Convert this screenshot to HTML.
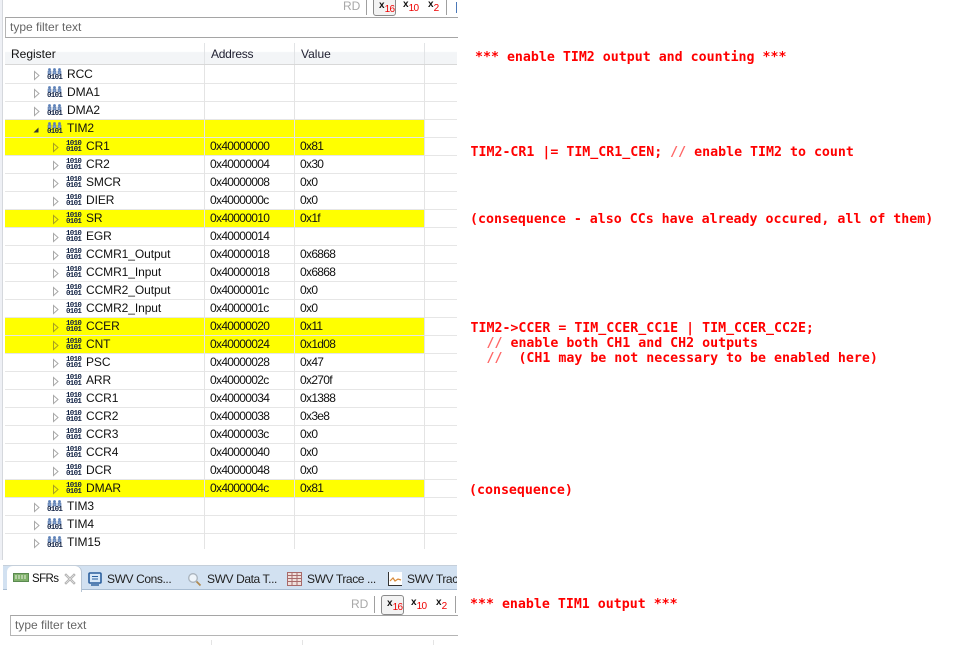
<!DOCTYPE html>
<html><head><meta charset="utf-8"><style>
html,body{margin:0;padding:0;background:#fff}
#p{position:relative;width:957px;height:645px;overflow:hidden;background:#fff;font-family:"Liberation Sans",sans-serif;font-size:12px;color:#111}
#p div,#p span.a,#p svg{position:absolute}
.r{left:5px;width:452px;height:18px;line-height:17px;box-shadow:inset 0 -1px 0 #e6e6e6}
.y{background:linear-gradient(#ff0,#ff0) 0 0/419px 17px no-repeat}
.v{top:65px;width:1px;height:484px;background:#e4e4e4}
.t{white-space:nowrap;line-height:17px;top:0;letter-spacing:-.08px}
.t[style*="left:205"],.t[style*="left:295"]{letter-spacing:-.68px}
.m{position:absolute;font:bold 13.27px/15px "DejaVu Sans Mono",monospace;color:#f00;white-space:pre}
.m i{font-style:normal;color:#f66}
.b{font:bold 7.5px/6px "Liberation Mono",monospace;color:#124;letter-spacing:-.7px;white-space:pre;width:17px}
.x{font:bold 10px/11px "Liberation Sans",sans-serif;color:#111;white-space:nowrap}
.x b{font-weight:normal;font-size:10px;color:#e00;position:relative;top:4px;left:0;letter-spacing:-.6px}
.tab{font-size:12px;color:#222;white-space:nowrap;top:571px;line-height:16px;letter-spacing:-.4px}
</style></head><body><div id="p">

<div style="left:0;top:0;width:3px;height:560px;background:#eef0f5"></div>
<div style="left:2px;top:0;width:1px;height:560px;background:#d5d8dd"></div>

<div style="left:343px;top:-1px;font-size:12px;color:#a8a8a8;line-height:14px">RD</div>
<div style="left:366px;top:0;width:1px;height:15px;background:#a0a0a0"></div>
<div style="left:373px;top:-4px;width:21px;height:18px;border:1px solid #8a8a8a;border-radius:3px;background:#f3f3f3"></div>
<div class="x" style="left:379px;top:0">x<b>16</b></div>
<div class="x" style="left:403px;top:-1px">x<b>10</b></div>
<div class="x" style="left:428px;top:-1px">x<b>2</b></div>
<div style="left:446px;top:0;width:1px;height:15px;background:#a0a0a0"></div>
<div style="left:456px;top:2px;width:1px;height:11px;background:#4a78b8"></div>

<div style="left:5px;top:17px;width:452px;height:19px;border-top:1px solid #a5a5a5;border-left:1px solid #b5b5b5;border-bottom:1px solid #a5a5a5;box-sizing:content-box;background:#fff;color:#666;line-height:19px;text-indent:4px">type filter text</div>

<div style="left:5px;top:43px;width:452px;height:21px;background:linear-gradient(#fff 0,#fff 40%,#f3f5f7 45%,#f3f5f7 100%);border-bottom:1px solid #d8d8d8"></div>
<div style="left:11px;top:46px;line-height:16px">Register</div>
<div style="left:211px;top:46px;line-height:16px;color:#223;letter-spacing:-.25px">Address</div>
<div style="left:301px;top:46px;line-height:16px;color:#223">Value</div>
<div style="left:204px;top:43px;width:1px;height:21px;background:#e2e4e6"></div>
<div style="left:294px;top:43px;width:1px;height:21px;background:#e2e4e6"></div>
<div style="left:424px;top:43px;width:1px;height:21px;background:#e2e4e6"></div>

<div id="rows" style="left:0;top:0;width:457px;height:560px">
<div class="r" style="top:66px"><div class="t" style="left:62px">RCC</div></div>
<div class="r" style="top:84px"><div class="t" style="left:62px">DMA1</div></div>
<div class="r" style="top:102px"><div class="t" style="left:62px">DMA2</div></div>
<div class="r y" style="top:120px"><div class="t" style="left:62px">TIM2</div></div>
<div class="r y" style="top:138px"><div class="t" style="left:81px">CR1</div><div class="t" style="left:205px">0x40000000</div><div class="t" style="left:295px">0x81</div></div>
<div class="r" style="top:156px"><div class="t" style="left:81px">CR2</div><div class="t" style="left:205px">0x40000004</div><div class="t" style="left:295px">0x30</div></div>
<div class="r" style="top:174px"><div class="t" style="left:81px">SMCR</div><div class="t" style="left:205px">0x40000008</div><div class="t" style="left:295px">0x0</div></div>
<div class="r" style="top:192px"><div class="t" style="left:81px">DIER</div><div class="t" style="left:205px">0x4000000c</div><div class="t" style="left:295px">0x0</div></div>
<div class="r y" style="top:210px"><div class="t" style="left:81px">SR</div><div class="t" style="left:205px">0x40000010</div><div class="t" style="left:295px">0x1f</div></div>
<div class="r" style="top:228px"><div class="t" style="left:81px">EGR</div><div class="t" style="left:205px">0x40000014</div></div>
<div class="r" style="top:246px"><div class="t" style="left:81px">CCMR1_Output</div><div class="t" style="left:205px">0x40000018</div><div class="t" style="left:295px">0x6868</div></div>
<div class="r" style="top:264px"><div class="t" style="left:81px">CCMR1_Input</div><div class="t" style="left:205px">0x40000018</div><div class="t" style="left:295px">0x6868</div></div>
<div class="r" style="top:282px"><div class="t" style="left:81px">CCMR2_Output</div><div class="t" style="left:205px">0x4000001c</div><div class="t" style="left:295px">0x0</div></div>
<div class="r" style="top:300px"><div class="t" style="left:81px">CCMR2_Input</div><div class="t" style="left:205px">0x4000001c</div><div class="t" style="left:295px">0x0</div></div>
<div class="r y" style="top:318px"><div class="t" style="left:81px">CCER</div><div class="t" style="left:205px">0x40000020</div><div class="t" style="left:295px">0x11</div></div>
<div class="r y" style="top:336px"><div class="t" style="left:81px">CNT</div><div class="t" style="left:205px">0x40000024</div><div class="t" style="left:295px">0x1d08</div></div>
<div class="r" style="top:354px"><div class="t" style="left:81px">PSC</div><div class="t" style="left:205px">0x40000028</div><div class="t" style="left:295px">0x47</div></div>
<div class="r" style="top:372px"><div class="t" style="left:81px">ARR</div><div class="t" style="left:205px">0x4000002c</div><div class="t" style="left:295px">0x270f</div></div>
<div class="r" style="top:390px"><div class="t" style="left:81px">CCR1</div><div class="t" style="left:205px">0x40000034</div><div class="t" style="left:295px">0x1388</div></div>
<div class="r" style="top:408px"><div class="t" style="left:81px">CCR2</div><div class="t" style="left:205px">0x40000038</div><div class="t" style="left:295px">0x3e8</div></div>
<div class="r" style="top:426px"><div class="t" style="left:81px">CCR3</div><div class="t" style="left:205px">0x4000003c</div><div class="t" style="left:295px">0x0</div></div>
<div class="r" style="top:444px"><div class="t" style="left:81px">CCR4</div><div class="t" style="left:205px">0x40000040</div><div class="t" style="left:295px">0x0</div></div>
<div class="r" style="top:462px"><div class="t" style="left:81px">DCR</div><div class="t" style="left:205px">0x40000048</div><div class="t" style="left:295px">0x0</div></div>
<div class="r y" style="top:480px"><div class="t" style="left:81px">DMAR</div><div class="t" style="left:205px">0x4000004c</div><div class="t" style="left:295px">0x81</div></div>
<div class="r" style="top:498px"><div class="t" style="left:62px">TIM3</div></div>
<div class="r" style="top:516px"><div class="t" style="left:62px">TIM4</div></div>
<div class="r" style="top:534px;box-shadow:none"><div class="t" style="left:62px">TIM15</div></div>
</div>

<div class="v" style="left:204px"></div>
<div class="v" style="left:294px"></div>
<div class="v" style="left:424px"></div>

<svg style="left:0;top:0" width="100" height="560" viewBox="0 0 100 560">
<defs>
<g id="o"><path d="M0.5 0.5L5 4.5L0.5 8.5Z" fill="none" stroke="#a9a9a9"/></g>
<g id="oy"><path d="M0.5 0.5L5 4.5L0.5 8.5Z" fill="none" stroke="#a8a020"/></g>
<g id="pp"><g fill="#5b80b8"><circle cx="2.5" cy="1.5" r="1.4"/><circle cx="7.5" cy="1.5" r="1.4"/><circle cx="12.5" cy="1.5" r="1.4"/></g><g fill="#86a4cf" stroke="#3f5f95" stroke-width=".5"><rect x="1" y="3" width="3" height="3"/><rect x="6" y="3" width="3" height="3"/><rect x="11" y="3" width="3" height="3"/></g></g>
</defs>
<use href="#o" x="34" y="71"/><use href="#o" x="34" y="89"/><use href="#o" x="34" y="107"/>
<path d="M33.5 132.5L38.5 127.5V132.5Z" fill="#333"/>
<use href="#oy" x="53" y="143"/><use href="#o" x="53" y="161"/><use href="#o" x="53" y="179"/><use href="#o" x="53" y="197"/><use href="#oy" x="53" y="215"/><use href="#o" x="53" y="233"/><use href="#o" x="53" y="251"/><use href="#o" x="53" y="269"/><use href="#o" x="53" y="287"/><use href="#o" x="53" y="305"/><use href="#oy" x="53" y="323"/><use href="#oy" x="53" y="341"/><use href="#o" x="53" y="359"/><use href="#o" x="53" y="377"/><use href="#o" x="53" y="395"/><use href="#o" x="53" y="413"/><use href="#o" x="53" y="431"/><use href="#o" x="53" y="449"/><use href="#o" x="53" y="467"/><use href="#oy" x="53" y="485"/><use href="#o" x="34" y="503"/><use href="#o" x="34" y="521"/><use href="#o" x="34" y="539"/>
<use href="#pp" x="47" y="68"/><use href="#pp" x="47" y="86"/><use href="#pp" x="47" y="104"/><use href="#pp" x="47" y="122"/><use href="#pp" x="47" y="500"/><use href="#pp" x="47" y="518"/><use href="#pp" x="47" y="536"/>
</svg>

<div class="b" style="left:47px;top:75px">0101</div>
<div class="b" style="left:47px;top:93px">0101</div>
<div class="b" style="left:47px;top:111px">0101</div>
<div class="b" style="left:47px;top:129px">0101</div>
<div class="b" style="left:47px;top:507px">0101</div>
<div class="b" style="left:47px;top:525px">0101</div>
<div class="b" style="left:47px;top:543px">0101</div>

<div class="b" style="left:66px;top:141px">1010
0101</div>
<div class="b" style="left:66px;top:159px">1010
0101</div>
<div class="b" style="left:66px;top:177px">1010
0101</div>
<div class="b" style="left:66px;top:195px">1010
0101</div>
<div class="b" style="left:66px;top:213px">1010
0101</div>
<div class="b" style="left:66px;top:231px">1010
0101</div>
<div class="b" style="left:66px;top:249px">1010
0101</div>
<div class="b" style="left:66px;top:267px">1010
0101</div>
<div class="b" style="left:66px;top:285px">1010
0101</div>
<div class="b" style="left:66px;top:303px">1010
0101</div>
<div class="b" style="left:66px;top:321px">1010
0101</div>
<div class="b" style="left:66px;top:339px">1010
0101</div>
<div class="b" style="left:66px;top:357px">1010
0101</div>
<div class="b" style="left:66px;top:375px">1010
0101</div>
<div class="b" style="left:66px;top:393px">1010
0101</div>
<div class="b" style="left:66px;top:411px">1010
0101</div>
<div class="b" style="left:66px;top:429px">1010
0101</div>
<div class="b" style="left:66px;top:447px">1010
0101</div>
<div class="b" style="left:66px;top:465px">1010
0101</div>
<div class="b" style="left:66px;top:483px">1010
0101</div>

<!-- bottom panel -->
<div style="left:0;top:565px;width:457px;height:80px;background:#fff"></div>
<div style="left:3px;top:565px;width:454px;height:25px;background:#d2e1f1;border-top:1px solid #c5cfda;box-sizing:border-box;border-bottom:1px solid #a9bdd2"></div>
<div style="left:7px;top:566px;width:74px;height:26px;background:#fff;border-radius:6px 6px 0 0;box-shadow:1px 0 0 #b6c4d3"></div>

<svg style="left:12px;top:572px" width="17" height="12" viewBox="0 0 17 12"><rect x="1.5" y="1.5" width="15" height="8" fill="#7fb06a" stroke="#5a8a50"/><path d="M3 4h12M3 6h12" stroke="#e8f0e0" stroke-dasharray="2 1"/></svg>
<div class="tab" style="left:32px;color:#111;font-size:11.5px;letter-spacing:-.6px">SFRs</div>
<svg style="left:64px;top:573px" width="12" height="12" viewBox="0 0 12 12"><path d="M2 1L6 5L10 1L11 2L7 6L11 10L10 11L6 7L2 11L1 10L5 6L1 2Z" fill="#fff" stroke="#b4b4b4"/></svg>

<svg style="left:88px;top:572px" width="15" height="14" viewBox="0 0 15 14"><rect x="1" y="1" width="12" height="10" rx="1" fill="#d8e8f8" stroke="#2a5f9e" stroke-width="1.6"/><path d="M4 4.5h6M4 7h6" stroke="#2a5f9e"/><path d="M3 13h8" stroke="#2a5f9e" stroke-width="1.4"/></svg>
<div class="tab" style="left:107px">SWV Cons...</div>
<svg style="left:187px;top:572px" width="15" height="15" viewBox="0 0 15 15"><circle cx="6" cy="6" r="4.3" fill="#eef4fa" stroke="#a9b3bd" stroke-width="1.3"/><path d="M9.5 9.5L13.5 13.5" stroke="#b08a50" stroke-width="1.8"/></svg>
<div class="tab" style="left:207px">SWV Data T...</div>
<svg style="left:287px;top:572px" width="15" height="14" viewBox="0 0 15 14"><rect x=".5" y=".5" width="14" height="13" fill="#f0e0dc" stroke="#a86a6a"/><path d="M.5 3.5h14M.5 6.5h14M.5 9.5h14M5 .5v13M10 .5v13" stroke="#a86a6a"/></svg>
<div class="tab" style="left:307px">SWV Trace ...</div>
<svg style="left:387px;top:571px" width="16" height="16" viewBox="0 0 16 16"><rect x="1" y="1" width="14" height="14" fill="#fff"/><path d="M1.5 1v13.5H15" fill="none" stroke="#333"/><path d="M3 10L6 7L8 10L11 8L14 9" fill="none" stroke="#d88a3a" stroke-width="1.2"/></svg>
<div class="tab" style="left:407px;width:50px;overflow:hidden">SWV Trace</div>

<div style="left:351px;top:597px;font-size:12px;color:#a8a8a8;line-height:14px">RD</div>
<div style="left:374px;top:596px;width:1px;height:17px;background:#a0a0a0"></div>
<div style="left:381px;top:595px;width:21px;height:18px;border:1px solid #8a8a8a;border-radius:3px;background:#f3f3f3"></div>
<div class="x" style="left:387px;top:598px">x<b>16</b></div>
<div class="x" style="left:411px;top:597px">x<b>10</b></div>
<div class="x" style="left:436px;top:597px">x<b>2</b></div>
<div style="left:455px;top:596px;width:1px;height:17px;background:#a0a0a0"></div>

<div style="left:10px;top:615px;width:447px;height:19px;border-top:1px solid #a5a5a5;border-left:1px solid #b5b5b5;border-bottom:1px solid #b5b5b5;background:#fff;color:#666;line-height:19px;text-indent:4px">type filter text</div>
<div style="left:211px;top:640px;width:1px;height:5px;background:#e4e4e4"></div>
<div style="left:302px;top:640px;width:1px;height:5px;background:#e4e4e4"></div>
<div style="left:433px;top:640px;width:1px;height:5px;background:#e4e4e4"></div>

<!-- annotations -->
<span class="m" style="left:475px;top:50px">*** enable TIM2 output and counting ***</span>
<span class="m" style="left:470.5px;top:145px">TIM2-CR1 |= TIM_CR1_CEN; <i>//</i> enable TIM2 to count</span>
<span class="m" style="left:470px;top:212px">(consequence - also CCs have already occured, all of them)</span>
<span class="m" style="left:470.5px;top:321px">TIM2-&gt;CCER = TIM_CCER_CC1E | TIM_CCER_CC2E;</span>
<span class="m" style="left:470.5px;top:336px">  <i>//</i> enable both CH1 and CH2 outputs</span>
<span class="m" style="left:470.5px;top:351px">  <i>//</i>  (CH1 may be not necessary to be enabled here)</span>
<span class="m" style="left:469px;top:483px">(consequence)</span>
<span class="m" style="left:470px;top:597px">*** enable TIM1 output ***</span>
</div></body></html>
